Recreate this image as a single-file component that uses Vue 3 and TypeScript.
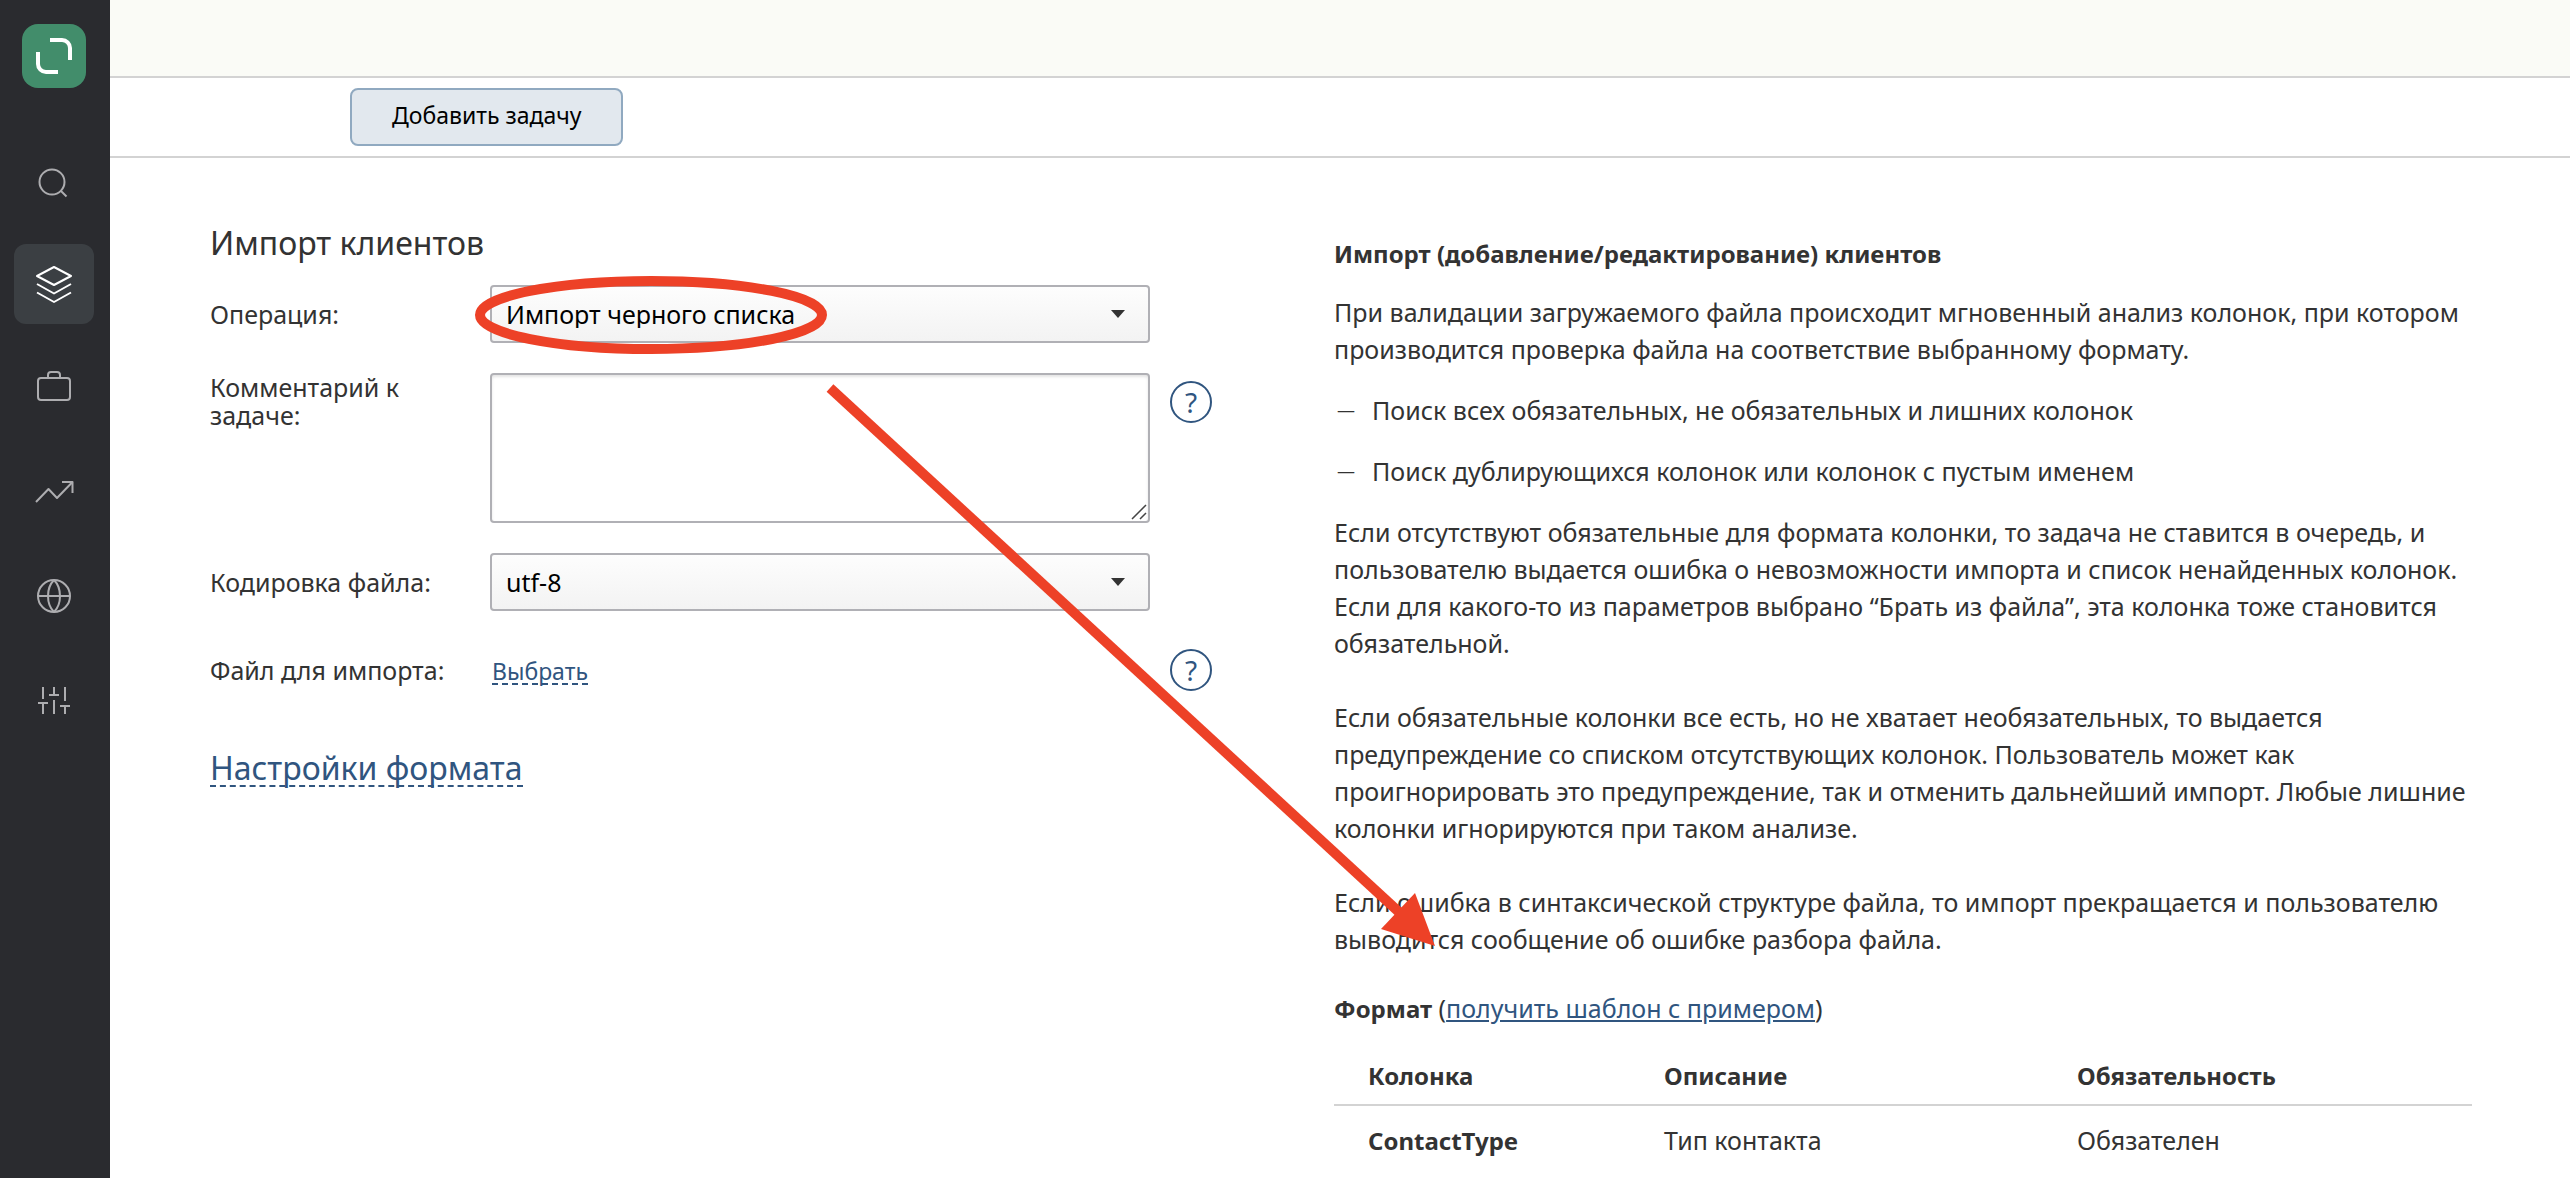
<script setup lang="ts">
import { ref } from 'vue'

interface NavItem {
  name: string
  paths: string[]
}

interface FormatColumn {
  name: string
  description: string
  required: string
}

const navItems: NavItem[] = [
  { name: 'Поиск', paths: ['M50.500 42a12.500 12.500 0 1 0-25 0a12.500 12.500 0 0 0 25 0z', 'M46.500 50.500l6 6'] },
  { name: 'Задачи', paths: ['M40 23L57 32L40 41L23 32z', 'M23 40L40 49.500L57 40', 'M23 48.500L40 58L57 48.500'] },
  { name: 'Портфель', paths: ['M27 30H53a3 3 0 0 1 3 3V49a3 3 0 0 1-3 3H27a3 3 0 0 1-3-3V33a3 3 0 0 1 3-3z', 'M34 30V27a3 3 0 0 1 3-3h6a3 3 0 0 1 3 3v3'] },
  { name: 'Аналитика', paths: ['M22 50L34.500 37L43 46L58.500 30', 'M48 30H58.500V41'] },
  { name: 'Сайты', paths: ['M56 40a16 16 0 1 0-32 0a16 16 0 0 0 32 0z', 'M24 40H56', 'M40 24C32 32 32 48 40 56', 'M40 24C48 32 48 48 40 56'] },
  { name: 'Настройки', paths: ['M29 27V39M29 43V54M24 43H34', 'M40 27V35M40 40V54M35 35H45', 'M51 27V41M51 46V54M46 46H56'] },
]

const activeItem = ref('Задачи')
const operation = ref('Импорт черного списка')
const encoding = ref('utf-8')
const comment = ref('')

const columns: FormatColumn[] = [
  { name: 'ContactType', description: 'Тип контакта', required: 'Обязателен' },
]
</script>

<template>
  <div class="page">
    <nav class="sidebar" aria-label="Главное меню">
      <a class="logo" href="#" aria-label="Главная">
        <svg width="64" height="64" viewBox="0 0 64 64" fill="none" stroke="#fff" stroke-width="4">
          <path d="M28 16H40a8 8 0 0 1 8 8V36" />
          <path d="M16 28V40a8 8 0 0 0 8 8H36" />
        </svg>
      </a>
      <button
        v-for="item in navItems"
        :key="item.name"
        type="button"
        class="nav-item"
        :class="{ active: item.name === activeItem }"
        :aria-label="item.name"
        @click="activeItem = item.name"
      >
        <svg width="80" height="80" viewBox="0 0 80 80" fill="none" stroke="currentColor" stroke-width="2" stroke-linejoin="round">
          <path v-for="d in item.paths" :key="d" :d="d" />
        </svg>
      </button>
    </nav>

    <div class="main">
      <header class="topbar"></header>
      <div class="toolbar">
        <button type="button" class="add-task">Добавить задачу</button>
      </div>

      <main class="content">
        <form class="form" @submit.prevent>
          <h1>Импорт клиентов</h1>

          <div class="row">
            <label for="operation">Операция:</label>
            <div class="field">
              <select id="operation" v-model="operation">
                <option>Импорт черного списка</option>
              </select>
              <svg class="caret" width="14" height="10" viewBox="0 0 14 10"><path d="M0 1H14L7 9z" fill="#333" /></svg>
            </div>
          </div>

          <div class="row top">
            <label for="comment">Комментарий к задаче:</label>
            <div class="field">
              <textarea id="comment" v-model="comment"></textarea>
              <svg class="grip" width="16" height="16" viewBox="0 0 16 16" fill="none" stroke="#444" stroke-width="1.500">
                <path d="M1 15L15 1M9 15L15 9" />
              </svg>
            </div>
            <button type="button" class="help" aria-label="Справка">?</button>
          </div>

          <div class="row">
            <label for="encoding">Кодировка файла:</label>
            <div class="field">
              <select id="encoding" v-model="encoding">
                <option>utf-8</option>
              </select>
              <svg class="caret" width="14" height="10" viewBox="0 0 14 10"><path d="M0 1H14L7 9z" fill="#333" /></svg>
            </div>
          </div>

          <div class="row file">
            <span>Файл для импорта:</span>
            <div class="field"><a class="dashed choose" href="#">Выбрать</a></div>
            <button type="button" class="help" aria-label="Справка">?</button>
          </div>

          <a class="dashed format-link" href="#">Настройки формата</a>
        </form>

        <section class="info">
          <h2>Импорт (добавление/редактирование) клиентов</h2>
          <p>
            При валидации загружаемого файла происходит мгновенный анализ колонок, при котором<br />
            производится проверка файла на соответствие выбранному формату.
          </p>
          <ul>
            <li>Поиск всех обязательных, не обязательных и лишних колонок</li>
            <li>Поиск дублирующихся колонок или колонок с пустым именем</li>
          </ul>
          <p>
            Если отсутствуют обязательные для формата колонки, то задача не ставится в очередь, и<br />
            пользователю выдается ошибка о невозможности импорта и список ненайденных колонок.<br />
            Если для какого-то из параметров выбрано “Брать из файла”, эта колонка тоже становится<br />
            обязательной.<br /><br />
            Если обязательные колонки все есть, но не хватает необязательных, то выдается<br />
            предупреждение со списком отсутствующих колонок. Пользователь может как<br />
            проигнорировать это предупреждение, так и отменить дальнейший импорт. Любые лишние<br />
            колонки игнорируются при таком анализе.<br /><br />
            Если ошибка в синтаксической структуре файла, то импорт прекращается и пользователю<br />
            выводится сообщение об ошибке разбора файла.
          </p>
          <p class="format"><b>Формат</b> (<a href="#">получить шаблон с примером</a>)</p>
          <table>
            <thead>
              <tr>
                <th class="col-name">Колонка</th>
                <th class="col-description">Описание</th>
                <th>Обязательность</th>
              </tr>
            </thead>
            <tbody>
              <tr v-for="column in columns" :key="column.name">
                <th scope="row">{{ column.name }}</th>
                <td>{{ column.description }}</td>
                <td>{{ column.required }}</td>
              </tr>
            </tbody>
          </table>
        </section>

        <!-- Highlight of the chosen operation and a pointer to its description -->
        <svg class="annotation" width="1360" height="820" viewBox="0 0 1360 820" aria-hidden="true">
          <ellipse cx="541" cy="157" rx="171" ry="34" fill="none" stroke="#ed4127" stroke-width="10" />
          <path d="M720 230L1290 755" stroke="#ed4127" stroke-width="10" />
          <path d="M1325 788L1305 735L1271 771z" fill="#ed4127" />
        </svg>
      </main>
    </div>
  </div>
</template>

<style>
body {
  margin: 0;
  background: #fff;
}
</style>

<style scoped>
.page {
  display: flex;
  min-height: 100vh;
  font-family: "Noto Sans", "Open Sans", sans-serif;
  font-size: 25px;
  line-height: 37px;
  color: #333;
}

.sidebar {
  display: flex;
  flex-direction: column;
  flex: none;
  gap: 24px;
  box-sizing: border-box;
  width: 110px;
  padding: 24px 16px 24px 14px;
  background: #2a2b2f;
}

.logo {
  width: 64px;
  height: 64px;
  margin: 0 0 28px 8px;
  border-radius: 16px;
  background: #428d6b;
}

.logo svg,
.nav-item svg {
  display: block;
}

.nav-item {
  width: 80px;
  height: 80px;
  padding: 0;
  border: 0;
  border-radius: 12px;
  background: none;
  color: #adadb0;
}

.nav-item.active {
  background: #3b3f43;
  color: #fff;
}

.main {
  flex: 1;
  min-width: 0;
}

.topbar {
  height: 76px;
  border-bottom: 2px solid #d3d3d3;
  background: #fafbf6;
}

.toolbar {
  padding: 10px 240px;
  border-bottom: 2px solid #d3d3d3;
}

.add-task {
  display: block;
  height: 58px;
  padding: 0 40px 4px;
  border: 2px solid #90a9c0;
  border-radius: 8px;
  background: #e2e8ee;
  font: inherit;
  font-size: 23px;
  color: #000;
}

.content {
  position: relative;
  display: grid;
  grid-template-columns: minmax(0, 1024fr) minmax(0, 1138fr);
  gap: 100px;
  padding: 60px 98px 0 100px;
}

.form {
  display: flex;
  flex-direction: column;
  gap: 30px;
}

h1 {
  margin: 1px 0 0;
  font-size: 32px;
  font-weight: 400;
  line-height: 48px;
}

h1 + .row {
  margin-top: -12px;
}

.row {
  display: grid;
  grid-template-columns: 260px minmax(0, 1fr) 42px;
  column-gap: 20px;
  align-items: center;
  padding-right: 22px;
  line-height: 28px;
}

.row.top {
  align-items: start;
}

.row.top .help {
  margin-top: 8px;
}

.row.file {
  margin-top: 8px;
}

.field {
  position: relative;
}

select,
textarea {
  display: block;
  box-sizing: border-box;
  width: 100%;
  border: 2px solid #b0b0b5;
  border-radius: 4px;
  font: inherit;
  color: #000;
}

select {
  height: 58px;
  padding: 0 40px 0 14px;
  appearance: none;
  background: linear-gradient(#fdfdfd, #f3f3f3);
}

textarea {
  height: 150px;
  padding: 10px 14px;
  background: #fff;
  box-shadow: inset 0 2px 3px #e4e4e4;
  resize: none;
}

.caret {
  position: absolute;
  top: 24px;
  right: 25px;
}

.grip {
  position: absolute;
  right: 3px;
  bottom: 3px;
}

.help {
  width: 42px;
  height: 42px;
  padding: 0;
  border: 2px solid #30557f;
  border-radius: 50%;
  background: none;
  font: inherit;
  font-size: 28px;
  line-height: 36px;
  color: #30557f;
}

a {
  color: #30557f;
}

.dashed {
  border-bottom: 2px dashed #30557f;
  text-decoration: none;
}

.choose {
  display: inline-block;
  margin-left: 2px;
  font-size: 23px;
  line-height: 24px;
}

.format-link {
  align-self: flex-start;
  margin-top: 30px;
  font-size: 32px;
  line-height: 34px;
}

.info {
  white-space: nowrap;
}

h2 {
  margin: 17px 0 22px;
  font-size: 24px;
  font-weight: 700;
}

p {
  margin: 0 0 24px;
}

ul {
  display: flex;
  flex-direction: column;
  gap: 24px;
  margin: 0 0 24px;
  padding: 0;
  list-style: none;
}

li {
  display: flex;
}

li::before {
  content: "—";
  flex: none;
  box-sizing: border-box;
  width: 38px;
  padding-left: 3px;
  font-size: 18px;
}

.format {
  margin: 32px 0 24px;
}

.format b,
th {
  font-size: 24px;
}

table {
  width: 100%;
  table-layout: fixed;
  border-collapse: collapse;
}

th,
td {
  padding: 6px 34px 10px;
  text-align: left;
}

thead tr {
  border-bottom: 2px solid #d3d3d3;
}

tbody th,
tbody td {
  padding-top: 16px;
}

.col-name {
  width: 228px;
}

.col-description {
  width: 345px;
}

.annotation {
  position: absolute;
  top: 0;
  left: 0;
  pointer-events: none;
}
</style>
